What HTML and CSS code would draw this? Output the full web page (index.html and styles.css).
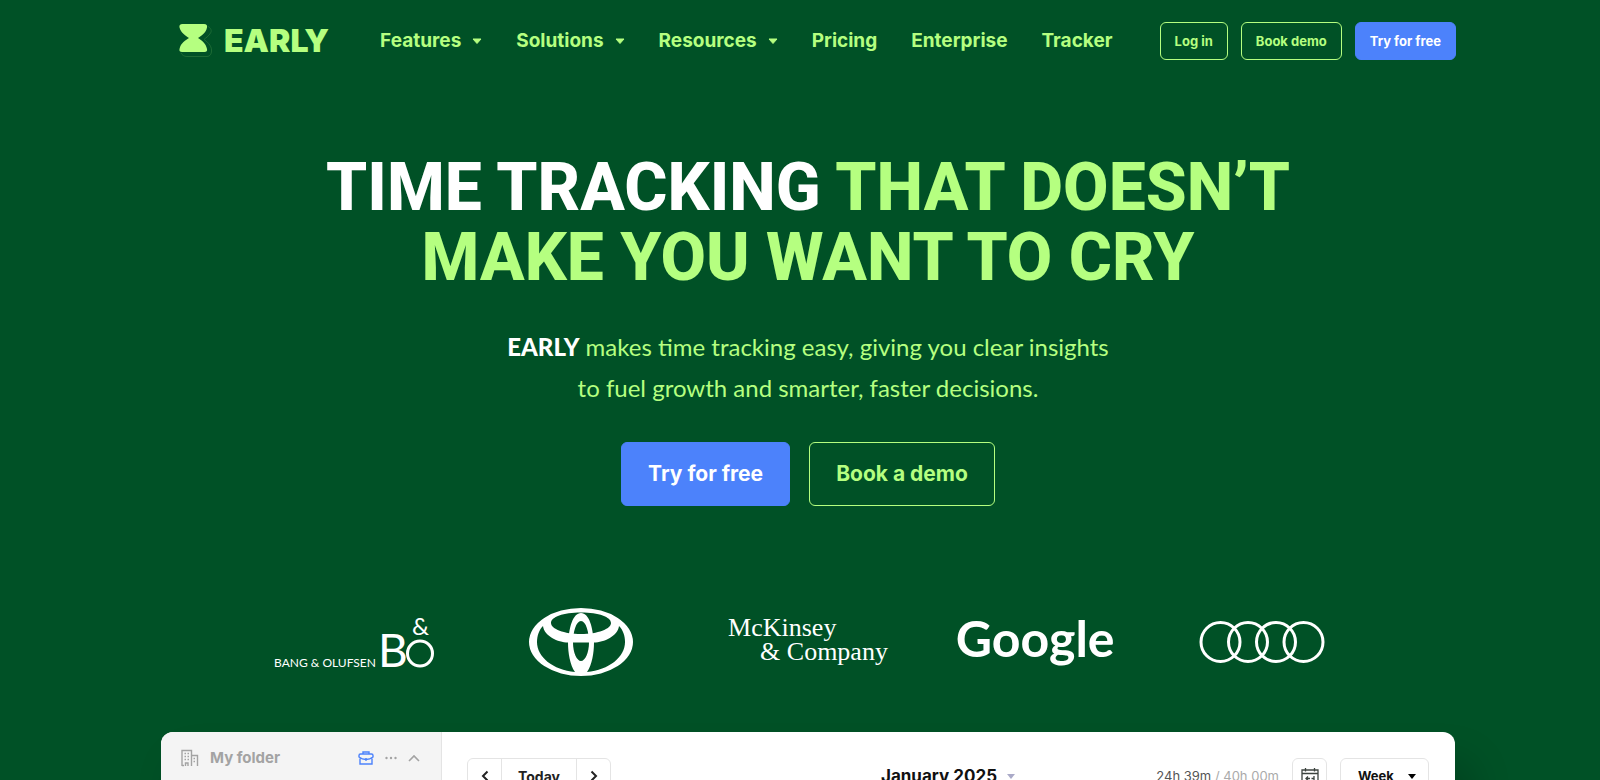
FILE: index.html
```html
<!DOCTYPE html>
<html lang="en">
<head>
    <meta charset="UTF-8">
    <meta name="viewport" content="width=device-width, initial-scale=1.0">
    <title>EARLY</title>
    <link rel="stylesheet" href="styles.css">
</head>
<body>
    <div class="page">
        <header class="header">
            <a class="brand" href="#">
                <svg class="brand-mark" width="34" height="36" viewBox="0 0 34 36" aria-hidden="true">
                    <path d="M29 3.500C32 5 33 8 31.500 10C30 13 26 15.500 25 16.500C27 18 33 22 32.500 28C32.500 31 31 33.500 28 33.500H8C5 33.500 3 32 2 30" fill="none" stroke="#1d6b35" stroke-width="1"/>
                    <path d="M3.500 1H25C27.500 1 28.500 2.500 28 4.500C27 10 22 13 19 15C22 17 27 20 28 26C28.500 28 27.500 29 25.500 29H3C1 29 0 28 .5 26C1.500 20 7 17 10 15C7 13 2 10 .5 4.500C0 2.500 1 1 3.500 1Z" fill="#b5ff80"/>
                </svg>
                <span>EARLY</span>
            </a>
            <nav class="nav">
                <button class="nav-item" type="button">Features <svg class="caret" width="10" height="7" viewBox="0 0 10 7"><path d="M1 1H9L5 5.500Z"/></svg></button>
                <button class="nav-item" type="button">Solutions <svg class="caret" width="10" height="7" viewBox="0 0 10 7"><path d="M1 1H9L5 5.500Z"/></svg></button>
                <button class="nav-item" type="button">Resources <svg class="caret" width="10" height="7" viewBox="0 0 10 7"><path d="M1 1H9L5 5.500Z"/></svg></button>
                <a class="nav-item" href="#">Pricing</a>
                <a class="nav-item" href="#">Enterprise</a>
                <a class="nav-item" href="#">Tracker</a>
            </nav>
            <div class="header-actions">
                <a class="btn btn-small btn-outline" href="#">Log in</a>
                <a class="btn btn-small btn-outline" href="#">Book demo</a>
                <a class="btn btn-small btn-blue" href="#">Try for free</a>
            </div>
        </header>

        <section class="hero">
            <h1><span class="white">TIME TRACKING</span> THAT DOESN’T<br>MAKE YOU WANT TO CRY</h1>
            <p class="lead"><strong>EARLY</strong> makes time tracking easy, giving you clear insights<br>to fuel growth and smarter, faster decisions.</p>
            <div class="hero-actions">
                <a class="btn btn-large btn-blue" href="#">Try for free</a>
                <a class="btn btn-large btn-outline" href="#">Book a demo</a>
            </div>
        </section>

        <div class="logos">
            <svg width="160" height="68" viewBox="0 -6 160 68" fill="#fff" role="img" aria-label="Bang &amp; Olufsen">
                <text class="bo-name" x="0" y="53">BANG &amp; OLUFSEN</text>
                <text class="bo-b" x="104" y="53">B</text>
                <text class="bo-and" x="138" y="21">&amp;</text>
                <circle cx="146" cy="39.500" r="12.500" fill="none" stroke="#fff" stroke-width="3"/>
            </svg>
            <svg width="104" height="68" viewBox="0 0 104 68" fill="#fff" fill-rule="evenodd" role="img" aria-label="Toyota">
                <path d="M52 0A52 34 0 1 0 52 68A52 34 0 1 0 52 0ZM52 4.500C70 4.500 82 9 82 15C82 21 69 26 52 26S22 21 22 15C22 9 34 4.500 52 4.500ZM14 18C15 28 29 34.500 39 34.500C39 45 41 57 46 64C24 62 8 49 8 34C8 28 10 22 14 18ZM90 18C94 22 96 28 96 34C96 49 80 62 58 64C63 57 65 45 65 34.500C75 34.500 89 28 90 18ZM44 34.500H60C60 45 56 53 52 53S44 45 44 34.500Z"/>
                <path d="M52 5C44 5 39.500 20 39.500 35H44C44 24 47 13 52 13S60 24 60 35H64.500C64.500 20 60 5 52 5Z"/>
            </svg>
            <div class="mckinsey"><span>McKinsey</span><span class="company">&amp; Company</span></div>
            <div class="google">Google</div>
            <svg width="126" height="44" viewBox="0 0 126 44" fill="none" stroke="#fff" stroke-width="3" role="img" aria-label="Audi">
                <circle cx="21.500" cy="22" r="19.500"/>
                <circle cx="49" cy="22" r="19.500"/>
                <circle cx="77" cy="22" r="19.500"/>
                <circle cx="104.500" cy="22" r="19.500"/>
            </svg>
        </div>

        <section class="app">
            <aside class="sidebar">
                <div class="folder">
                    <svg width="18" height="18" viewBox="0 0 18 18" fill="none" stroke="#a3a3a3" stroke-width="1.400">
                        <path d="M1 17V1.500H10.500V17M10.500 6.500H16.500V17M1 16.500H3M4.500 17V14H7V17"/>
                        <path d="M3.500 4.500H8.500M3.500 7.500H8.500M3.500 10.500H8.500M12.500 9.500H14.500M12.500 12.500H14.500" stroke-dasharray="1.500 1.500"/>
                    </svg>
                    <span class="folder-name">My folder</span>
                    <svg width="16" height="14" viewBox="0 0 16 14" fill="none" stroke="#4c82fb" stroke-width="1.400">
                        <path d="M5 3V1H11V3M2.500 3H13.500Q15 3 15 4.500V6Q12 8.500 8 8.500T1 6V4.500Q1 3 2.500 3ZM2 7.500V13H14V7.500M8 7V10"/>
                    </svg>
                    <svg width="12" height="4" viewBox="0 0 12 4" fill="#a3a3a3"><circle cx="1.500" cy="2" r="1.200"/><circle cx="6" cy="2" r="1.200"/><circle cx="10.500" cy="2" r="1.200"/></svg>
                    <svg width="12" height="8" viewBox="0 0 12 8" fill="none" stroke="#a3a3a3" stroke-width="1.600"><path d="M1 7L6 2L11 7"/></svg>
                </div>
            </aside>
            <div class="calendar">
                <div class="pager">
                    <button type="button" aria-label="Previous"><svg width="8" height="12" viewBox="0 0 8 12"><path d="M6.500 1.500L2 6L6.500 10.500"/></svg></button>
                    <button type="button" class="today">Today</button>
                    <button type="button" aria-label="Next"><svg width="8" height="12" viewBox="0 0 8 12"><path d="M1.500 1.500L6 6L1.500 10.500"/></svg></button>
                </div>
                <button class="month" type="button">January 2025 <svg width="8" height="5" viewBox="0 0 8 5"><path d="M0 0H8L4 5Z" fill="#aaaac8"/></svg></button>
                <div class="tools">
                    <span class="hours">24h 39m <span>/ 40h 00m</span></span>
                    <button class="tool" type="button" aria-label="Calendar">
                        <svg width="18" height="18" viewBox="0 0 18 18" fill="none" stroke="#3c433f" stroke-width="1.300"><path d="M1 3H17V17H1ZM1 6.500H17M4.500 1V4.500M13.500 1V4.500M5 11.500H9M7 9.500L5 11.500L7 13.500M13 11.500H10.500M13 9V14"/></svg>
                    </button>
                    <div class="range">
                        <select aria-label="Range"><option>Week</option></select>
                        <svg width="8" height="5" viewBox="0 0 8 5"><path d="M0 0H8L4 5Z"/></svg>
                    </div>
                </div>
            </div>
        </section>
    </div>
</body>
</html>
```
FILE: styles.css
```css
* {
    box-sizing: border-box;
}
body {
    margin: 0;
    background-color: #005126;
    color: #b5ff80;
    font-family: Inter, "Liberation Sans", sans-serif;
}
a {
    color: inherit;
    text-decoration: none;
}
button, select {
    margin: 0;
    padding: 0;
    border: 0;
    background: none;
    color: inherit;
    font: inherit;
    cursor: pointer;
}
.page {
    display: flex;
    flex-direction: column;
    align-items: center;
    height: 100vh;
    padding-left: 16px;
    overflow: hidden;
}

/* header */
.header {
    display: flex;
    align-items: center;
    width: 100%;
    max-width: 1296px;
    padding: 22px 0 0 19px;
    flex-shrink: 0;
}
.brand {
    display: flex;
    align-items: center;
    gap: 11px;
    font-size: 32px;
    line-height: 38px;
    font-weight: 900;
}
.nav {
    display: flex;
    gap: 34px;
    margin-left: 51px;
}
.nav-item {
    display: flex;
    align-items: center;
    gap: 11px;
    font-size: 19px;
    line-height: 24px;
    font-weight: 700;
}
.caret {
    fill: #b5ff80;
    stroke: #b5ff80;
    stroke-linejoin: round;
}
.header-actions {
    display: flex;
    gap: 13px;
    margin-left: auto;
}
.btn {
    border: 1px solid #b5ff80;
    border-radius: 6px;
    font-weight: 700;
    white-space: nowrap;
}
.btn-blue {
    background-color: #4c82fb;
    border-color: #4c82fb;
    color: #fff;
}
.btn-small {
    padding: 0 14px;
    font-size: 13px;
    line-height: 36px;
}
.btn-large {
    padding: 0 26px;
    font-size: 21px;
    line-height: 62px;
}

/* hero */
.hero {
    display: flex;
    flex-direction: column;
    align-items: center;
    text-align: center;
    flex-shrink: 0;
}
h1 {
    margin: 93px 0 0;
    font-family: Roboto, sans-serif;
    font-size: 66px;
    line-height: 70px;
    font-weight: 800;
}
.white, .lead strong {
    color: #fff;
}
.lead {
    margin: 33px 0 0;
    font-family: Lato, sans-serif;
    font-size: 24px;
    line-height: 41px;
}
.lead strong {
    font-weight: 900;
}
.hero-actions {
    display: flex;
    gap: 19px;
    margin-top: 34px;
}

/* customer logos */
.logos {
    display: grid;
    grid-template-columns: repeat(5, 1fr);
    align-items: center;
    justify-items: center;
    width: 100%;
    max-width: 1136px;
    margin-top: 102px;
    color: #fff;
    flex-shrink: 0;
}
.bo-name {
    font: 12px Lato, sans-serif;
}
.bo-b {
    font: 46px Lato, sans-serif;
}
.bo-and {
    font: 24px Lato, sans-serif;
}
.mckinsey {
    display: flex;
    flex-direction: column;
    padding-bottom: 4px;
    font-family: "Liberation Serif", serif;
    font-size: 26px;
    line-height: 24px;
}
.company {
    padding-left: 32px;
}
.google {
    padding-bottom: 8px;
    font-family: Lato, sans-serif;
    font-size: 50px;
    line-height: 60px;
    font-weight: 700;
}

/* app preview */
.app {
    display: flex;
    width: 100%;
    max-width: 1294px;
    height: 600px;
    margin-top: 56px;
    border-radius: 12px;
    background-color: #fff;
    box-shadow: 16px 30px 40px rgba(0, 0, 0, 0.2);
    overflow: hidden;
    flex-shrink: 0;
}
.sidebar {
    width: 281px;
    padding: 17px 21px 0 20px;
    border-right: 1px solid #e4e4e4;
    background-color: #f4f4f4;
}
.folder {
    display: flex;
    align-items: center;
    gap: 11px;
}
.folder-name {
    margin-right: auto;
    color: #a3a3a3;
    font-size: 15px;
    line-height: 18px;
    font-weight: 700;
}
.calendar {
    display: grid;
    grid-template-columns: 1fr auto 1fr;
    align-items: center;
    flex: 1;
    height: 36px;
    margin: 26px 26px 0 25px;
    color: #222;
}
.pager {
    display: flex;
    justify-self: start;
    border: 1px solid #e4e4e4;
    border-radius: 6px;
}
.pager button {
    width: 33px;
    height: 34px;
    font-size: 14px;
    font-weight: 700;
}
.pager .today {
    width: 76px;
    border: solid #e4e4e4;
    border-width: 0 1px;
}
.pager svg {
    fill: none;
    stroke: #222;
    stroke-width: 2;
}
.month {
    display: flex;
    align-items: center;
    gap: 10px;
    color: #111;
    font-size: 17px;
    line-height: 20px;
    font-weight: 700;
}
.tools {
    display: flex;
    align-items: center;
    justify-self: end;
    gap: 13px;
}
.hours {
    color: #555;
    font-size: 13px;
}
.hours span {
    color: #aaa;
}
.tool {
    display: grid;
    place-items: center;
    width: 35px;
    height: 36px;
    border: 1px solid #e4e4e4;
    border-radius: 6px;
}
.range {
    display: flex;
    align-items: center;
    gap: 14px;
    height: 36px;
    padding: 0 12px 0 17px;
    border: 1px solid #e4e4e4;
    border-radius: 6px;
    color: #111;
    font-size: 13px;
    font-weight: 700;
}
.range select {
    appearance: none;
}
```
